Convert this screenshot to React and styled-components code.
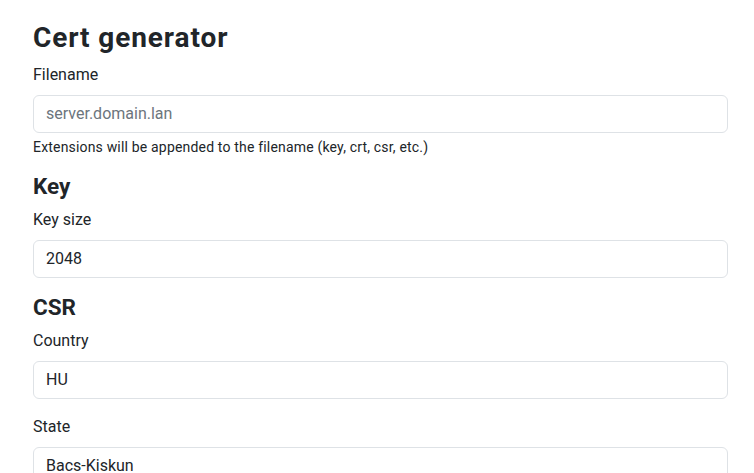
import React from "react";
import styled, { createGlobalStyle } from "styled-components";

const Global = createGlobalStyle`
  html, body { margin: 0; padding: 0; background: #fff; }
  body {
    font-family: Roboto, "Liberation Sans", sans-serif;
    font-size: 16px;
    line-height: 1.5;
    color: #212529;
  }
  *, *::before, *::after { box-sizing: border-box; }
`;

const Page = styled.main`
  padding: 21px 26px 0 33px;
`;

const Title = styled.h2`
  margin: 0 0 8px;
  font-size: 28px;
  line-height: 1.2;
  font-weight: 700;
  letter-spacing: 0.9px;
`;

const Section = styled.h4`
  margin: 0 0 8px;
  font-size: 22.5px;
  line-height: 27px;
  font-weight: 700;
`;

const Group = styled.div`
  margin-bottom: 16px;
`;

const Label = styled.label`
  display: block;
  margin-bottom: 8px;
`;

const Input = styled.input`
  display: block;
  width: 100%;
  height: 38px;
  padding: 6px 12px;
  font: inherit;
  color: #212529;
  background: #fff;
  border: 1px solid #dee2e6;
  border-radius: 6px;
  outline: none;
  &::placeholder { color: #6c757d; opacity: 1; }
`;

const Help = styled.div`
  margin-top: 4px;
  font-size: 14px;
  line-height: 20px;
  letter-spacing: 0.18px;
`;

export default function App() {
  return (
    <>
      <Global />
      <Page>
        <Title>Cert generator</Title>
        <Group>
          <Label htmlFor="fn">Filename</Label>
          <Input id="fn" placeholder="server.domain.lan" />
          <Help>Extensions will be appended to the filename (key, crt, csr, etc.)</Help>
        </Group>
        <Section>Key</Section>
        <Group>
          <Label htmlFor="ks">Key size</Label>
          <Input id="ks" defaultValue="2048" />
        </Group>
        <Section>CSR</Section>
        <Group>
          <Label htmlFor="c">Country</Label>
          <Input id="c" defaultValue="HU" />
        </Group>
        <Group>
          <Label htmlFor="s">State</Label>
          <Input id="s" defaultValue="Bacs-Kiskun" />
        </Group>
      </Page>
    </>
  );
}
